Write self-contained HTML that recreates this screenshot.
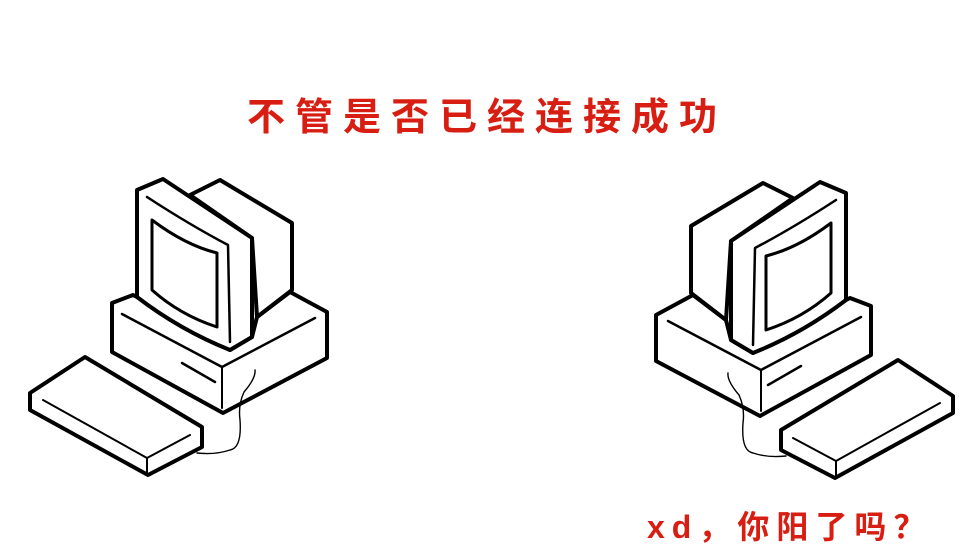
<!DOCTYPE html>
<html><head><meta charset="utf-8"><style>
html,body{margin:0;padding:0;background:#fff;}
body{width:971px;height:556px;overflow:hidden;position:relative;}
.t{position:absolute;color:#d81e12;font-family:"Liberation Sans","WenQuanYi Zen Hei","Noto Sans CJK SC",sans-serif;font-weight:bold;white-space:nowrap;}
</style></head><body>
<svg width="971" height="556" style="position:absolute;left:0;top:0">
<defs>
<g id="pc" fill="none" stroke="#000" stroke-linejoin="round" stroke-linecap="round">
  <path d="M112,303 L133,295 L137,297 L230,350 L252,337 L257,317 L290,292 L327,312 L327,358 L223,413 L112,352 Z" fill="#fff" stroke-width="4"/>
  <path d="M122,314 L222,367 L315,318" stroke-width="2.5"/>
  <path d="M222,367 L222,408" stroke-width="2"/>
  <path d="M182,363 L215,382" stroke-width="2.5"/>
  <path d="M190,195 L220,180 L292,223 L292,290 L257,317 L252,238 Z" fill="#fff" stroke-width="4"/>
  <path d="M137,190 L163,179 L252,238 L252,337 L230,350 Q180,330 137,297 Z" fill="#fff" stroke-width="4"/>
  <path d="M147,197 Q190,225 228,245 L230,342" stroke-width="2.5"/>
  <path d="M152,220 Q185,245 217,253 L217,327 Q180,315 152,290 Z" stroke-width="3"/>
  <path d="M30,393 L85,357 L202,427 L202,447 L148,475 L30,410 Z" fill="#fff" stroke-width="4"/>
  <path d="M43,400 L147,458 L190,435" stroke-width="2"/>
  <path d="M147,458 L147,475" stroke-width="2"/>
  <path d="M255,370 Q256,378 244,392 Q238,405 240,420 Q242,448 230,450 Q215,455 197,453" stroke-width="1.4"/>
</g>
</defs>
<use href="#pc"/>
<use href="#pc" transform="translate(983,3) scale(-1,1)"/>
</svg>
<div class="t" style="left:247px;top:95px;font-size:38px;letter-spacing:10px;line-height:46px;">不管是否已经连接成功</div>
<div class="t" style="left:647px;top:507px;font-size:32px;letter-spacing:7px;line-height:40px;">xd，你阳了吗？</div>
</body></html>
